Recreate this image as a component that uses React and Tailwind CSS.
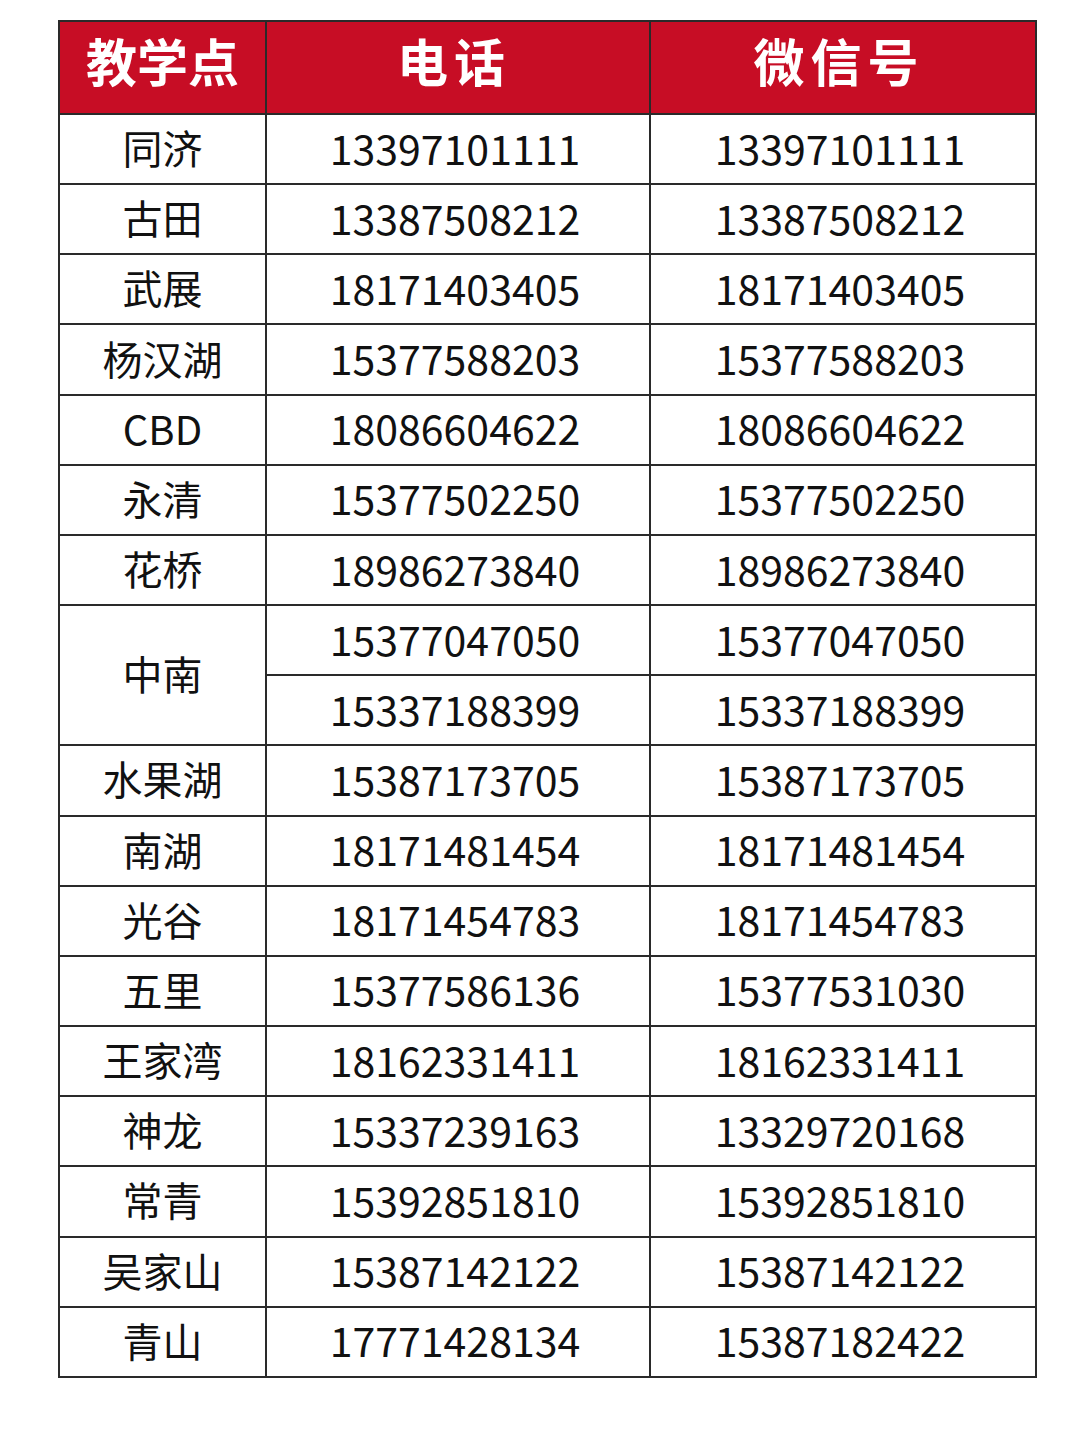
import React from "react";

const rows = [
  ["同济", "13397101111", "13397101111"],
  ["古田", "13387508212", "13387508212"],
  ["武展", "18171403405", "18171403405"],
  ["杨汉湖", "15377588203", "15377588203"],
  ["CBD", "18086604622", "18086604622"],
  ["永清", "15377502250", "15377502250"],
  ["花桥", "18986273840", "18986273840"],
  ["中南", "15377047050", "15377047050", "15337188399", "15337188399"],
  ["水果湖", "15387173705", "15387173705"],
  ["南湖", "18171481454", "18171481454"],
  ["光谷", "18171454783", "18171454783"],
  ["五里", "15377586136", "15377531030"],
  ["王家湾", "18162331411", "18162331411"],
  ["神龙", "15337239163", "13329720168"],
  ["常青", "15392851810", "15392851810"],
  ["吴家山", "15387142122", "15387142122"],
  ["青山", "17771428134", "15387182422"],
];

const base = "border-2 border-[#2a2a2a] text-center align-middle leading-none text-[#111] h-[70.17px] p-0 pb-[4px]";
const nameCell = base + " text-[40px]";
const numCell = base + " text-[41px] pr-[6px]";

export default function App() {
  return (
    <div
      className="w-[1080px] h-[1431px] bg-white pt-[20px] pl-[58px]"
      style={{ fontFamily: '"Noto Sans CJK SC", "Noto Sans", sans-serif' }}
    >
      <table className="border-collapse table-fixed w-[977px]">
        <colgroup>
          <col className="w-[207px]" />
          <col className="w-[384px]" />
          <col className="w-[386px]" />
        </colgroup>
        <thead>
          <tr>
            <th className="bg-[#c70d25] border-2 border-[#2a2a2a] h-[93px] p-0 pb-[14px] text-white text-[51px] font-bold leading-none text-center">
              教学点
            </th>
            <th className="bg-[#c70d25] border-2 border-[#2a2a2a] h-[93px] p-0 pb-[14px] pr-[8px] text-white text-[51px] font-bold leading-none text-center tracking-[6px]">
              电话
            </th>
            <th className="bg-[#c70d25] border-2 border-[#2a2a2a] h-[93px] p-0 pb-[14px] pr-[8px] text-white text-[51px] font-bold leading-none text-center tracking-[6px]">
              微信号
            </th>
          </tr>
        </thead>
        <tbody>
          {rows.map((r) =>
            r.length === 5 ? (
              <React.Fragment key={r[0]}>
                <tr>
                  <td rowSpan={2} className={nameCell}>{r[0]}</td>
                  <td className={numCell}>{r[1]}</td>
                  <td className={numCell}>{r[2]}</td>
                </tr>
                <tr>
                  <td className={numCell}>{r[3]}</td>
                  <td className={numCell}>{r[4]}</td>
                </tr>
              </React.Fragment>
            ) : (
              <tr key={r[0]}>
                <td className={nameCell}>{r[0]}</td>
                <td className={numCell}>{r[1]}</td>
                <td className={numCell}>{r[2]}</td>
              </tr>
            )
          )}
        </tbody>
      </table>
    </div>
  );
}
